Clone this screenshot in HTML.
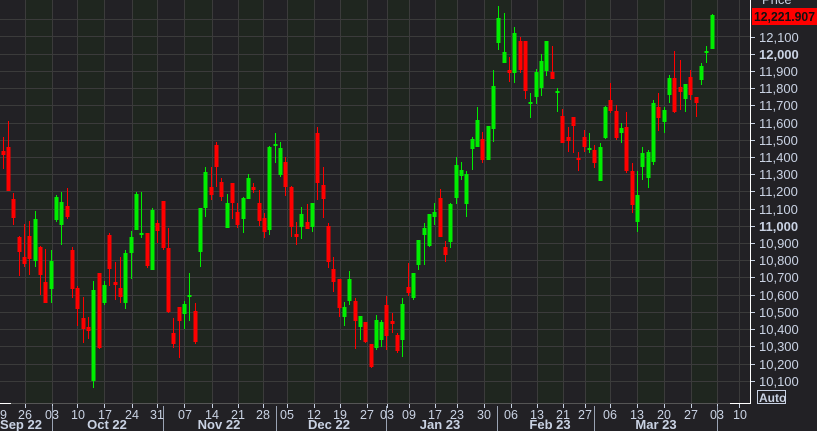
<!DOCTYPE html>
<html><head><meta charset="utf-8"><style>
html,body{margin:0;padding:0;background:#222125;}
body{width:817px;height:431px;overflow:hidden;position:relative;font-family:"Liberation Sans",sans-serif;}
svg{position:absolute;left:0;top:0;}
text{font-family:"Liberation Sans",sans-serif;fill:#c9d2e3;}
</style></head><body>
<svg width="817" height="431" viewBox="0 0 817 431" shape-rendering="crispEdges">
<rect x="0" y="0" width="817" height="431" fill="#222125"/>
<g fill="#1f261f">
<rect x="25" y="0" width="27" height="403"/><rect x="77" y="0" width="27" height="403"/><rect x="132" y="0" width="25" height="403"/><rect x="184" y="0" width="28" height="403"/><rect x="238" y="0" width="25" height="403"/><rect x="287" y="0" width="27" height="403"/><rect x="340" y="0" width="27" height="403"/><rect x="387" y="0" width="22" height="403"/><rect x="435" y="0" width="22" height="403"/><rect x="484" y="0" width="27" height="403"/><rect x="537" y="0" width="26" height="403"/><rect x="585" y="0" width="25" height="403"/><rect x="637" y="0" width="27" height="403"/><rect x="691" y="0" width="26" height="403"/>
</g>
<g stroke="#3b3b3b" stroke-width="1">
<path d="M0 19.5H750M0 36.5H750M0 54.5H750M0 71.5H750M0 88.5H750M0 105.5H750M0 123.5H750M0 140.5H750M0 157.5H750M0 174.5H750M0 191.5H750M0 209.5H750M0 226.5H750M0 243.5H750M0 260.5H750M0 277.5H750M0 295.5H750M0 312.5H750M0 329.5H750M0 346.5H750M0 364.5H750M0 381.5H750"/>
<path d="M25.5 0V403M52.5 0V403M77.5 0V403M104.5 0V403M132.5 0V403M157.5 0V403M184.5 0V403M212.5 0V403M238.5 0V403M263.5 0V403M287.5 0V403M314.5 0V403M340.5 0V403M367.5 0V403M387.5 0V403M409.5 0V403M435.5 0V403M457.5 0V403M484.5 0V403M511.5 0V403M537.5 0V403M563.5 0V403M585.5 0V403M610.5 0V403M637.5 0V403M664.5 0V403M691.5 0V403M717.5 0V403M739.5 0V403"/>
</g>
<path fill="none" stroke="#ff0000" stroke-width="1" d="M3.5 137V169M8.5 121V191M13.5 193V225M19.5 236V276M24.5 224V267M29.5 221V275M40.5 246V295M45.5 249V303M67.5 188V219M72.5 247V298M77.5 286V326M83.5 297V343M88.5 317V339M99.5 273V349M109.5 233V286M115.5 262V300M120.5 257V303M147.5 233V268M157.5 220V243M163.5 201V250M168.5 228V313M173.5 318V348M179.5 307V358M195.5 303V344M211.5 167V200M216.5 142V187M221.5 178V201M232.5 183V219M237.5 203V228M253.5 183V193M259.5 190V226M264.5 213V238M285.5 157V196M291.5 186V237M296.5 222V245M307.5 204V229M317.5 127V200M323.5 167V218M328.5 223V268M333.5 257V292M339.5 279V317M355.5 298V349M365.5 322V343M371.5 344V368M386.5 296V350M392.5 313V333M397.5 333V353M408.5 263V296M440.5 189V237M445.5 241V262M482.5 132V163M509.5 57V82M520.5 37V73M525.5 41V99M552.5 46V79M562.5 109V143M568.5 127V152M573.5 117V153M578.5 152V171M584.5 130V152M594.5 145V168M610.5 83V113M616.5 105V140M626.5 112V173M632.5 163V213M658.5 93V131M674.5 51V113M680.5 60V110M690.5 70V100M696.5 97V117"/>
<path fill="none" stroke="#ff0000" stroke-width="4" d="M3.5 151V155M8.5 147V191M13.5 199V218M19.5 237V252M24.5 257V264M29.5 236V259M40.5 247V275M45.5 282V303M67.5 206V217M72.5 250V289M77.5 288V309M83.5 318V329M88.5 327V331M99.5 273V348M109.5 235V269M115.5 282V285M120.5 288V297M147.5 233V266M157.5 223V231M163.5 201V248M168.5 248V312M173.5 333V344M179.5 307V321M195.5 311V342M211.5 187V195M216.5 145V167M221.5 182V197M232.5 183V203M237.5 212V225M253.5 187V190M259.5 203V221M264.5 218V232M285.5 162V187M291.5 187V227M296.5 234V237M307.5 222V229M317.5 133V183M323.5 185V199M328.5 226V262M333.5 269V282M339.5 279V308M355.5 301V321M365.5 322V342M371.5 344V367M386.5 305V336M392.5 321V324M397.5 335V351M408.5 287V293M440.5 198V237M445.5 247V255M482.5 139V160M509.5 70V73M520.5 41V70M525.5 41V91M552.5 72V79M562.5 116V143M568.5 137V141M573.5 117V126M578.5 158V160M584.5 137V147M594.5 150V163M610.5 100V111M616.5 111V138M626.5 127V171M632.5 171V205M658.5 107V118M674.5 78V112M680.5 87V92M690.5 77V95M696.5 97V103"/>
<path fill="none" stroke="#00ee00" stroke-width="1" d="M35.5 211V267M51.5 250V303M56.5 195V222M61.5 192V245M93.5 281V388M104.5 281V305M125.5 250V309M131.5 231V279M136.5 192V230M141.5 192V238M152.5 208V270M184.5 301V329M189.5 273V321M200.5 208V267M205.5 167V217M227.5 194V228M243.5 197V233M248.5 174V199M269.5 146V235M275.5 133V163M280.5 142V177M301.5 207V239M312.5 203V232M344.5 302V326M349.5 271V305M360.5 316V340M376.5 315V350M381.5 320V347M402.5 298V357M413.5 273V300M418.5 240V270M424.5 223V265M429.5 214V247M434.5 203V225M450.5 203V248M456.5 157V204M461.5 162V180M466.5 171V217M472.5 137V170M477.5 107V147M488.5 126V160M493.5 70V142M498.5 6V50M504.5 13V63M514.5 27V83M530.5 93V118M536.5 69V104M541.5 54V96M546.5 41V76M557.5 88V112M589.5 133V153M600.5 143V181M605.5 106V139M621.5 123V143M637.5 171V232M642.5 147V180M648.5 150V188M653.5 100V165M664.5 107V133M669.5 75V103M685.5 84V112M701.5 63V85M706.5 46V63M712.5 14V49"/>
<path fill="none" stroke="#00ee00" stroke-width="4" d="M35.5 219V261M51.5 261V289M56.5 197V220M61.5 202V225M93.5 290V381M104.5 285V303M125.5 253V303M131.5 237V253M136.5 194V230M141.5 233V235M152.5 210V270M184.5 304V314M189.5 295V297M200.5 208V252M205.5 172V208M227.5 203V228M243.5 198V219M248.5 178V199M269.5 147V230M275.5 144V146M280.5 148V175M301.5 214V227M312.5 203V227M344.5 307V317M349.5 279V301M360.5 316V327M376.5 320V348M381.5 322V340M402.5 304V340M413.5 273V298M418.5 240V265M424.5 228V235M429.5 214V246M434.5 212V217M450.5 204V242M456.5 165V198M461.5 170V176M466.5 174V204M472.5 139V149M477.5 120V147M488.5 126V160M493.5 86V129M498.5 18V43M504.5 52V63M514.5 33V73M530.5 102V104M536.5 72V97M541.5 61V88M546.5 41V71M557.5 91V93M589.5 148V150M600.5 147V181M605.5 107V138M621.5 128V133M637.5 195V222M642.5 153V167M648.5 152V178M653.5 103V162M664.5 110V122M669.5 78V95M685.5 84V99M701.5 66V80M706.5 51V53M712.5 15V49"/>
<path d="M750.5 0V404" stroke="#ffffff" stroke-width="1"/>
<path d="M0 403.5H750" stroke="#555" stroke-width="1"/>
<path d="M0 403.5H11M730 403.5H750" stroke="#fff" stroke-width="1"/>
<g stroke="#c9d2e3" stroke-width="1">
<path d="M751 37.5H755M751 54.5H755M751 71.5H755M751 88.5H755M751 105.5H755M751 123.5H755M751 140.5H755M751 157.5H755M751 174.5H755M751 191.5H755M751 209.5H755M751 226.5H755M751 243.5H755M751 260.5H755M751 277.5H755M751 295.5H755M751 312.5H755M751 329.5H755M751 346.5H755M751 364.5H755M751 381.5H755"/>
<path d="M25.5 404V408M52.5 404V408M77.5 404V408M104.5 404V408M132.5 404V408M157.5 404V408M184.5 404V408M212.5 404V408M238.5 404V408M263.5 404V408M287.5 404V408M314.5 404V408M340.5 404V408M367.5 404V408M387.5 404V408M409.5 404V408M435.5 404V408M457.5 404V408M484.5 404V408M511.5 404V408M537.5 404V408M563.5 404V408M585.5 404V408M610.5 404V408M637.5 404V408M664.5 404V408M691.5 404V408M717.5 404V408M739.5 404V408"/>
</g>
<g stroke="#9aa3b3" stroke-width="1">
<path d="M52.5 406V431M163.5 406V431M276.5 406V431M386.5 406V431M497.5 406V431M594.5 406V431M717.5 406V431"/>
</g>
<g font-size="13">
<text x="759" y="42">12,100</text>
<text x="759" y="59" font-weight="bold">12,000</text>
<text x="759" y="76">11,900</text>
<text x="759" y="93">11,800</text>
<text x="759" y="110">11,700</text>
<text x="759" y="128">11,600</text>
<text x="759" y="145">11,500</text>
<text x="759" y="162">11,400</text>
<text x="759" y="179">11,300</text>
<text x="759" y="196">11,200</text>
<text x="759" y="214">11,100</text>
<text x="759" y="231" font-weight="bold">11,000</text>
<text x="759" y="248">10,900</text>
<text x="759" y="265">10,800</text>
<text x="759" y="282">10,700</text>
<text x="759" y="300">10,600</text>
<text x="759" y="317">10,500</text>
<text x="759" y="334">10,400</text>
<text x="759" y="351">10,300</text>
<text x="759" y="369">10,200</text>
<text x="759" y="386">10,100</text>
<text x="762" y="4">Price</text>
</g>
<rect x="752" y="8" width="65" height="17" fill="#ff0000"/>
<text x="754" y="21" font-size="13" font-weight="bold" textLength="61" lengthAdjust="spacingAndGlyphs" style="fill:#111">12,221.907</text>
<rect x="757.5" y="390.5" width="28" height="13" fill="none" stroke="#c9d2e3"/>
<text x="759" y="402" font-size="12" font-weight="bold">Auto</text>
<g font-size="12.5" text-anchor="middle">
<text x="0" y="419">19</text><text x="25" y="419">26</text><text x="52" y="419">03</text><text x="78" y="419">10</text><text x="105" y="419">17</text><text x="132" y="419">24</text><text x="157" y="419">31</text><text x="185" y="419">07</text><text x="212" y="419">14</text><text x="238" y="419">21</text><text x="263" y="419">28</text><text x="287" y="419">05</text><text x="314" y="419">12</text><text x="340" y="419">19</text><text x="367" y="419">27</text><text x="387" y="419">03</text><text x="409" y="419">09</text><text x="435" y="419">17</text><text x="457" y="419">23</text><text x="484" y="419">30</text><text x="511" y="419">06</text><text x="537" y="419">13</text><text x="563" y="419">21</text><text x="585" y="419">27</text><text x="610" y="419">06</text><text x="637" y="419">13</text><text x="664" y="419">20</text><text x="691" y="419">27</text><text x="717" y="419">03</text><text x="740" y="419">10</text>
</g>
<g font-size="13" font-weight="bold" text-anchor="middle">
<text x="21" y="429">Sep 22</text><text x="107" y="429">Oct 22</text><text x="219" y="429">Nov 22</text><text x="329" y="429">Dec 22</text><text x="440" y="429">Jan 23</text><text x="550" y="429">Feb 23</text><text x="656" y="429">Mar 23</text>
</g>
</svg>
</body></html>
